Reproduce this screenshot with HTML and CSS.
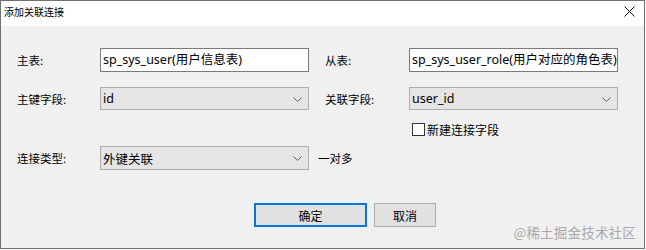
FILE: index.html
```html
<!DOCTYPE html>
<html lang="zh-CN">
<head>
    <meta charset="UTF-8">
    <title>添加关联连接</title>
    <link rel="stylesheet" href="styles.css">
</head>
<body>

<div class="window">
    <!-- Title bar -->
    <div class="titlebar">
        <span class="title">添加关联连接</span>
        <svg class="close" width="11" height="11" viewBox="0 0 11 11">
            <path d="M0.5 0.5 L10.5 10.5 M10.5 0.5 L0.5 10.5" stroke="#111" stroke-width="1" fill="none"/>
        </svg>
    </div>

    <div class="content">
        <div class="row row-first">
            <span class="label">主表:</span>
            <div class="textbox">sp_sys_user(用户信息表)</div>
            <span></span>
            <span class="label">从表:</span>
            <div class="textbox">sp_sys_user_role(用户对应的角色表)</div>
        </div>

        <div class="row row-second">
            <span class="label">主键字段:</span>
            <div class="combo">
                <span>id</span>
                <svg class="chevron" width="9" height="5" viewBox="0 0 9 5"><polyline points="0.5,0.5 4.5,4.5 8.5,0.5" stroke="#606060" fill="none"/></svg>
            </div>
            <span></span>
            <span class="label">关联字段:</span>
            <div class="combo">
                <span>user_id</span>
                <svg class="chevron" width="9" height="5" viewBox="0 0 9 5"><polyline points="0.5,0.5 4.5,4.5 8.5,0.5" stroke="#606060" fill="none"/></svg>
            </div>
        </div>

        <div class="row row-check">
            <span></span>
            <span></span>
            <span></span>
            <span></span>
            <label class="check"><span class="box"></span>新建连接字段</label>
        </div>

        <div class="row row-third">
            <span class="label">连接类型:</span>
            <div class="combo">
                <span>外键关联</span>
                <svg class="chevron" width="9" height="5" viewBox="0 0 9 5"><polyline points="0.5,0.5 4.5,4.5 8.5,0.5" stroke="#606060" fill="none"/></svg>
            </div>
            <span class="relation">一对多</span>
        </div>

        <div class="buttons">
            <div class="btn btn-default">确定</div>
            <div class="btn btn-cancel">取消</div>
        </div>

        <div class="watermark">@稀土掘金技术社区</div>
    </div>
</div>

</body>
</html>
```

FILE: styles.css
```css
body {
    margin: 0;
    padding: 0;
    background-color: #ffffff;
    font-family: "Noto Sans", "Noto Sans CJK SC", sans-serif;
    color: #000;
}
.window {
    width: 645px;
    height: 249px;
    box-sizing: border-box;
    border: 1px solid #707070;
    background-color: #f0f0f0;
    display: flex;
    flex-direction: column;
}
.titlebar {
    height: 25px;
    background-color: #ffffff;
    display: flex;
    align-items: center;
    justify-content: space-between;
    padding: 0 9px 0 3px;
}
.title {
    font-family: "Noto Sans CJK SC", sans-serif;
    font-size: 10px;
    line-height: 12px;
    margin-top: -3px;
}
.close {
    margin-top: -4px;
}
.content {
    position: relative;
    flex: 1;
    padding-left: 16px;
}
.row {
    display: grid;
    grid-template-columns: 83px 209px 16px 84px 209px;
    align-items: center;
}
.row-first {
    margin-top: 22px;
    height: 24px;
}
.row-second {
    margin-top: 15px;
    height: 23px;
}
.row-check {
    margin-top: 13px;
    height: 13px;
}
.row-third {
    margin-top: 10px;
    height: 24px;
}
.label {
    font-family: "Noto Sans CJK SC", sans-serif;
    font-size: 11.5px;
    line-height: 14px;
}
.textbox {
    height: 24px;
    box-sizing: border-box;
    border: 1px solid #7a7a7a;
    background-color: #ffffff;
    padding-left: 2px;
    font-size: 12.5px;
    line-height: 21px;
    white-space: nowrap;
    overflow: hidden;
}
.combo {
    height: 100%;
    box-sizing: border-box;
    border: 1px solid #adadad;
    background-color: #e5e5e5;
    display: flex;
    align-items: center;
    justify-content: space-between;
    padding: 0 6px 0 2px;
    font-size: 12.5px;
}
.chevron {
    margin-top: 1px;
}
.check {
    display: flex;
    align-items: center;
    gap: 2px;
    margin-left: 3px;
    font-family: "Noto Sans CJK SC", sans-serif;
    font-size: 12px;
    line-height: 13px;
    white-space: nowrap;
}
.box {
    width: 13px;
    height: 13px;
    box-sizing: border-box;
    border: 1px solid #333333;
    background-color: #ffffff;
}
.relation {
    grid-column: 3 / span 2;
    padding-left: 9px;
    font-family: "Noto Sans CJK SC", sans-serif;
    font-size: 11.5px;
}
.buttons {
    display: flex;
    gap: 7px;
    margin-top: 33px;
    padding-left: 237px;
}
.btn {
    height: 24px;
    box-sizing: border-box;
    background-color: #e1e1e1;
    text-align: center;
    font-family: "Noto Sans CJK SC", sans-serif;
    font-size: 12px;
    display: flex;
    align-items: center;
    justify-content: center;
}
.btn-default {
    width: 113px;
    border: 2px solid #0078d7;
}
.btn-cancel {
    width: 62px;
    border: 1px solid #adadad;
}
.watermark {
    position: absolute;
    right: 8px;
    bottom: 6px;
    font-family: "Noto Sans CJK SC", sans-serif;
    font-size: 13.5px;
    color: #a9a9a9;
    letter-spacing: 0.2px;
}
```
